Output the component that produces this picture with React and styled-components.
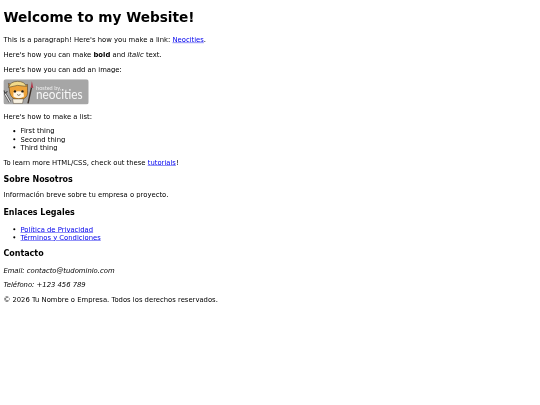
import React from "react";
import styled, { createGlobalStyle } from "styled-components";

const GlobalStyle = createGlobalStyle`
  html, body {
    margin: 0;
    background: #fff;
  }
`;

const Frame = styled.div`
  width: 540px;
  height: 405px;
  overflow: hidden;
`;

// the page is laid out at 1266 wide and shrunk to the window
const Page = styled.div`
  width: 1250px;
  padding: 3px 8px 8px;
  color: #000;
  font-family: "DejaVu Sans", Verdana, sans-serif;
  font-size: 16px;
  transform: scale(0.4265);
  transform-origin: 0 0;
  filter: blur(0.5px);
`;

const Heading = styled.h1`
  font-size: 32px;
  margin: 19.44px 0 23.44px;
`;

const SubHeading = styled.h3`
  font-size: 18.72px;
  margin: 18.72px 0;
`;

const Text = styled.p`
  margin: 16px 0;
`;

const Link = styled.a`
  color: #0000ee;
`;

const List = styled.ul`
  margin: ${({ $top }) => $top || 16}px 0 16px;
  padding-left: 40px;
`;

const BadgeLink = styled.a`
  display: block;
  width: 200px;
  margin-top: -3px;
  padding-bottom: 2px;

  svg {
    display: block;
  }
`;

const Hosted = styled.text`
  font-family: "Lato", sans-serif;
  font-size: 6.5px;
  fill: #ececec;
`;

const Brand = styled.text`
  font-family: "Lato", sans-serif;
  font-size: 12.5px;
  fill: #f6f6f6;
`;

const Badge = () => (
  <svg width="200" height="59" viewBox="0 0 85 25">
    <rect width="85" height="25" rx="2.5" fill="#a6a6a6" />
    {/* wrench */}
    <path d="M1.500 14 L6.500 22.500" stroke="#3f3f3f" strokeWidth="2.400" fill="none" />
    <path d="M1.500 14 L6.500 22.500" stroke="#ececec" strokeWidth="1.200" fill="none" />
    <path d="M0.500 11 L1.500 14 L4 12" stroke="#3f3f3f" strokeWidth="1.100" fill="none" />
    {/* cat head */}
    <path d="M6 10 L5 4 L10 6 Q15 3 20 6 L24 5 L24 11 Q25 17 20 19.500 L11 19.500 Q6 17 6 10 Z" fill="#eda33a" stroke="#3a2a18" strokeWidth="0.500" />
    {/* hard hat */}
    <path d="M5 8 Q7 2 14 2 Q21 2 23 7 L14 6 Z" fill="#f1d98a" stroke="#3a2a18" strokeWidth="0.500" />
    <path d="M10 13 Q15 10.500 20 13 L20.500 17 Q15 20.500 10 17 Z" fill="#fff5e2" />
    <circle cx="11.500" cy="12" r="1.200" fill="#1e1a18" />
    <circle cx="19" cy="12" r="1.200" fill="#1e1a18" />
    <path d="M13.500 15 Q15.300 17 17 15" fill="none" stroke="#1e1a18" strokeWidth="0.600" />
    {/* body and brush */}
    <path d="M9 19.500 L20 19.500 L19 24 L10 24 Z" fill="#f7f0e0" stroke="#3a2a18" strokeWidth="0.400" />
    <path d="M24.500 24 L28 8" stroke="#3b2d25" strokeWidth="1.400" fill="none" />
    <path d="M27.200 8 L28.400 2 L29.800 8.500 Z" fill="#b33a4c" />
    <Hosted x="32.500" y="10.500" textLength="25" lengthAdjust="spacingAndGlyphs">hosted by,</Hosted>
    <Brand x="32.500" y="20" textLength="46.500" lengthAdjust="spacingAndGlyphs">neocities</Brand>
  </svg>
);

export default function App() {
  return (
    <>
      <GlobalStyle />
      <Frame>
        <Page>
          <Heading>Welcome to my Website!</Heading>
          <Text>
            This is a paragraph! Here's how you make a link: <Link href="#">Neocities</Link>.
          </Text>
          <Text>
            Here's how you can make <strong>bold</strong> and <em>italic</em> text.
          </Text>
          <Text>Here's how you can add an image:</Text>
          <BadgeLink href="#">
            <Badge />
          </BadgeLink>
          <Text>Here's how to make a list:</Text>
          <List>
            <li>First thing</li>
            <li>Second thing</li>
            <li>Third thing</li>
          </List>
          <Text>
            To learn more HTML/CSS, check out these <Link href="#">tutorials</Link>!
          </Text>
          <SubHeading>Sobre Nosotros</SubHeading>
          <Text>Información breve sobre tu empresa o proyecto.</Text>
          <SubHeading>Enlaces Legales</SubHeading>
          <List $top={20.5}>
            <li><Link href="#">Política de Privacidad</Link></li>
            <li><Link href="#">Términos y Condiciones</Link></li>
          </List>
          <SubHeading>Contacto</SubHeading>
          <Text><em>Email: contacto@tudominio.com</em></Text>
          <Text><em>Teléfono: +123 456 789</em></Text>
          <Text>© 2026 Tu Nombre o Empresa. Todos los derechos reservados.</Text>
        </Page>
      </Frame>
    </>
  );
}
